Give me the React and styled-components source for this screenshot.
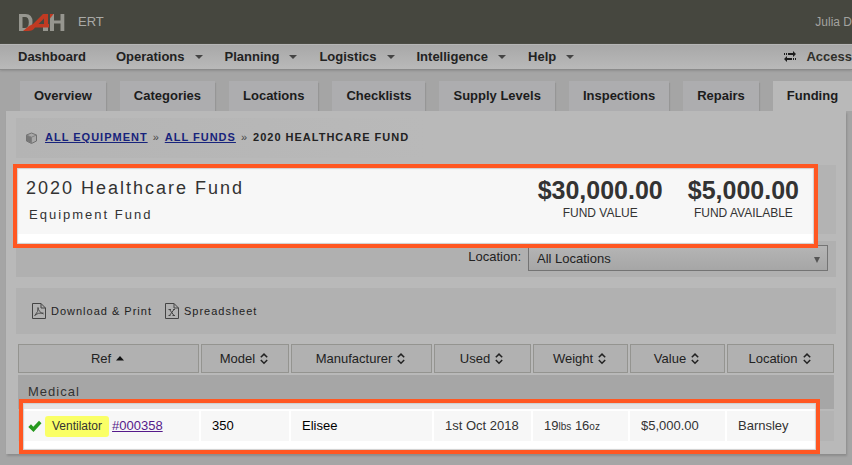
import React from "react";
import styled, { createGlobalStyle, css } from "styled-components";

const GlobalStyle = createGlobalStyle`
  * { box-sizing: border-box; }
  body {
    margin: 0;
    background: #a5a5a5;
    color: #222;
    font: 13px/16px "Liberation Sans", Arial, sans-serif;
    overflow: hidden;
  }
  button, select { font: inherit; color: inherit; }
`;

const Page = styled.div`
  white-space: nowrap;
  min-height: 100vh;
`;

const TopBar = styled.header`
  display: flex;
  align-items: center;
  height: 44px;
  padding: 0 0 0 18px;
  background: #46473f;
  color: #a3a39f;
`;

const LogoLink = styled.a`
  display: block;
  height: 20px;
  svg { display: block; }
`;

const OrgName = styled.span`
  margin-left: 13px;
  color: #aaaaa6;
`;

const UserLink = styled.a`
  margin-left: auto;
  color: inherit;
  font-size: 12px;
  text-decoration: none;
`;

const MainNav = styled.nav`
  display: flex;
  align-items: center;
  height: 26px;
  padding-left: 18px;
  border-top: 1px solid #b6b6b6;
  border-bottom: 1px solid #8b8b8b;
  background: linear-gradient(#a8a8a8, #b9b9b9);
  box-shadow: 0 1px 2px #8f8f8f;
  position: relative;
`;

const NavButton = styled.button`
  display: flex;
  align-items: center;
  gap: 10px;
  padding: 0;
  margin-right: ${(p) => (p.$plain ? 30 : 22)}px;
  border: 0;
  background: none;
  font-weight: 700;
`;

const Caret = styled.span`
  border: 4px solid transparent;
  border-top-color: #444;
  border-bottom: 0;
`;

const AccessButton = styled(NavButton)`
  margin: 0 0 0 auto;
  color: #30302b;
`;

const Tabs = styled.nav`
  display: flex;
  gap: 14px;
  padding: 11px 0 0 20px;
`;

const Tab = styled.a`
  padding: 7px 14px;
  color: #1c1c1c;
  background: #adadaf;
  font-weight: 700;
  text-decoration: none;
  box-shadow: 1px 2px 1px #969696;
  ${(p) =>
    p.$active &&
    css`
      flex: 1;
      background: #b9b9b9;
      box-shadow: none;
    `}
`;

const Card = styled.main`
  position: relative;
  margin: 0 6px;
  padding: 7px 10px 11px;
  background: #b9b9b9;
  box-shadow: 1px 2px 2px #8c8c8c;
`;

const Breadcrumb = styled.nav`
  display: flex;
  align-items: center;
  gap: 5px;
  height: 40px;
  margin-bottom: 7px;
  padding: 0 0 2px 10px;
  background: linear-gradient(90deg, #b4b4b4, #b9b9b9 50%);
  font-size: 11px;
  font-weight: 700;
  letter-spacing: 1px;
  text-transform: uppercase;
  svg { margin: 2px 3px 0 0; }
`;

const CrumbLink = styled.a`
  color: #17237c;
`;

const Divider = styled.span`
  color: #444;
  font-weight: 400;
`;

const Spotlight = styled.div`
  position: relative;
  z-index: 1;
  &::before,
  &::after {
    content: "";
    position: absolute;
    inset: ${(p) => p.$inset};
    pointer-events: none;
  }
  &::before {
    z-index: -1;
    background: #fff;
  }
  &::after {
    border: 4px solid #ff5722;
    box-shadow: inset 0 0 1px 1px #cfcfcf;
  }
`;

const Panel = styled.section`
  display: flex;
  background: rgba(0, 0, 0, 0.03);
`;

const FundPanel = styled(Panel)`
  height: 69px;
  padding: 12px 37px 0 10px;
  color: #333;
`;

const FundTitle = styled.h1`
  margin: 0;
  font-size: 18px;
  line-height: 22px;
  font-weight: 400;
  letter-spacing: 2px;
`;

const FundKind = styled.p`
  margin: 8px 0 0 3px;
  letter-spacing: 2px;
`;

const Stats = styled.dl`
  display: flex;
  gap: 25px;
  margin: 0 0 0 auto;
  text-align: center;
`;

const Stat = styled.div`
  display: flex;
  flex-direction: column-reverse;
  justify-content: flex-end;
`;

const StatLabel = styled.dt`
  margin-top: 2px;
  font-size: 12px;
`;

const StatValue = styled.dd`
  margin: 0;
  font-size: 25px;
  line-height: 26px;
  font-weight: 700;
`;

const FilterPanel = styled(Panel)`
  justify-content: flex-end;
  gap: 7px;
  height: 36px;
  margin: 7px 0 11px;
  padding: 4px 8px 0;
  background: #b0b0b0;
`;

const FilterLabel = styled.label`
  padding-top: 4px;
`;

const SelectBox = styled.div`
  position: relative;
  display: flex;
  flex: 0 0 300px;
  svg {
    position: absolute;
    right: 7px;
    top: 12px;
    pointer-events: none;
  }
`;

const Select = styled.select`
  appearance: none;
  width: 100%;
  height: 26px;
  padding: 1px 8px 0;
  border: 1px solid #747474;
  border-radius: 0;
  background: linear-gradient(#b5b5b5, #a6a6a6);
`;

const Toolbar = styled(Panel)`
  align-items: center;
  gap: 13px;
  height: 46px;
  margin-bottom: 8px;
  padding-left: 16px;
  background: #b1b1b1;
`;

const ToolButton = styled.button`
  display: flex;
  align-items: center;
  gap: 5px;
  padding: 0;
  border: 0;
  background: none;
  font-size: 11px;
  letter-spacing: 1px;
`;

const Table = styled.table`
  width: 100%;
  table-layout: fixed;
  border-spacing: 2px;
`;

const Col = styled.col`
  width: ${(p) => (p.$w ? `${p.$w}px` : "auto")};
`;

const HeadCell = styled.th`
  height: 29px;
  padding: 0 2px 0 0;
  border: 1px solid #949490;
  background: #b1b1b1;
  font-weight: 400;
`;

const SortButton = styled.button`
  display: inline-flex;
  align-items: center;
  gap: 5px;
  padding: 0;
  border: 0;
  background: none;
`;

const GroupCell = styled.th`
  height: 34px;
  padding: 0 10px;
  background: rgba(0, 0, 0, 0.1);
  color: #333;
  font-weight: 400;
  letter-spacing: 1px;
  text-align: left;
`;

const Cell = styled.td`
  height: 30px;
  padding: 0 ${(p) => (p.$first ? 10 : 11)}px;
  background: rgba(0, 0, 0, 0.03);
  color: ${(p) => (p.$strong ? "#000" : "#333")};
  small { font-size: 10px; }
`;

const RefLine = styled.div`
  display: flex;
  align-items: center;
  gap: 3px;
`;

const TypeTag = styled.span`
  padding: 2px 7px 3px;
  border-radius: 3px;
  background: #faff66;
  font-size: 12px;
`;

const RefLink = styled.a`
  color: #551a8b;
`;

function Logo() {
  return (
    <svg width="47" height="20" viewBox="0 0 47 20" aria-label="D4H" role="img">
      <path
        d="M1 2h6.500Q14.500 2 14.500 10q0 9-7 9H1zM4.500 5v11H7q3.800 0 3.800-5.800Q10.800 5 7 5z"
        fill="#96968f"
        fillRule="evenodd"
      />
      <path d="M32 2h4v6.500h6.500V2h3.800v17h-3.800v-7.500H36V19h-4z" fill="#96968f" />
      <path d="M25 15h5v4h-5z" fill="#96968f" />
      <path
        d="M5 19l6-5 4-2L25 2h5v10h1v3.500H17q-2 3.500-7 3.500zM26 6.500L20.500 12H26z"
        fill="#c03a22"
        fillRule="evenodd"
      />
      <path d="M32 2h3.500L32 6.500z" fill="#c03a22" />
    </svg>
  );
}

function SwapIcon() {
  return (
    <svg width="12" height="13" viewBox="0 0 12 13" aria-hidden="true">
      <path d="M4 3h5M3 8h5" stroke="#1c1c1c" strokeWidth="2" />
      <path d="M0 3h1m1 0h1M9 8h1m1 0h1" stroke="#1c1c1c" strokeWidth="2" />
      <path d="M9 0l3 3-3 3zM3 5L0 8l3 3z" fill="#1c1c1c" />
    </svg>
  );
}

function CubeIcon() {
  return (
    <svg width="11" height="12" viewBox="0 0 11 12" aria-hidden="true">
      <path d="M.5 3 5.500 1l5 2v6l-5 2.500-5-2.500z" fill="#a8a8a8" stroke="#707070" />
      <path d="M.5 3l5 2.200v6l-5-2.200z" fill="#777" />
      <path d="M.5 3l5 2.200 5-2.200M5.500 5.200v6" fill="none" stroke="#808080" />
    </svg>
  );
}

function FileIcon({ kind }) {
  return (
    <svg width="14" height="16" viewBox="0 0 14 16" fill="none" stroke="#444" aria-hidden="true">
      <path d="M.5.5h8.500l4.500 4.500v10.500H.5zM9 .5V5h4.500" />
      {kind === "pdf" ? (
        <path d="M6 4.500q1 3.500-3.500 8.500M6 4.500q.5 4.500 5.500 6.500M3 12q3-2.500 8.500-2" strokeWidth=".9" />
      ) : (
        <path d="M4.500 6.500l4.500 6M9 6.500l-4.500 6M3.500 6.500H6M8 6.500h2M3.500 12.500h2M7.500 12.500H10" />
      )}
    </svg>
  );
}

function SortIcon({ active }) {
  return active ? (
    <svg width="8" height="12" viewBox="0 0 8 12" aria-hidden="true">
      <path d="M4 3 8 7.500H0z" fill="#111" />
    </svg>
  ) : (
    <svg width="8" height="12" viewBox="0 0 8 12" fill="none" stroke="#222" strokeWidth="1.500" aria-hidden="true">
      <path d="M.8 4.300 4 1.100l3.200 3.200M.8 7 4 10.200l3.200-3.200" />
    </svg>
  );
}

function TickIcon() {
  return (
    <svg width="14" height="12" viewBox="0 0 14 12" role="img" aria-label="OK">
      <path d="M.3 7 3 4.300l2.300 2.500L11 .7l2.500 2.500L5.500 12z" fill="#27991f" />
    </svg>
  );
}

const menus = ["Operations", "Planning", "Logistics", "Intelligence", "Help"];
const tabs = [
  "Overview", "Categories", "Locations", "Checklists",
  "Supply Levels", "Inspections", "Repairs", "Funding",
];
const columns = [
  { name: "Ref" },
  { name: "Model", width: 88 },
  { name: "Manufacturer", width: 141 },
  { name: "Used", width: 97 },
  { name: "Weight", width: 95 },
  { name: "Value", width: 95 },
  { name: "Location", width: 107 },
];
const stats = [
  ["FUND VALUE", "$30,000.00"],
  ["FUND AVAILABLE", "$5,000.00"],
];

export default function App() {
  return (
    <Page>
      <GlobalStyle />
      <TopBar>
        <LogoLink href="#home"><Logo /></LogoLink>
        <OrgName>ERT</OrgName>
        <UserLink href="#profile">Julia D</UserLink>
      </TopBar>
      <MainNav>
        <NavButton $plain>Dashboard</NavButton>
        {menus.map((name) => (
          <NavButton key={name}>{name}<Caret /></NavButton>
        ))}
        <AccessButton><SwapIcon />Access</AccessButton>
      </MainNav>
      <Tabs>
        {tabs.map((name) => (
          <Tab key={name} href={`#${name}`} $active={name === "Funding"}>{name}</Tab>
        ))}
      </Tabs>
      <Card>
        <Breadcrumb>
          <CubeIcon />
          <CrumbLink href="#equipment">All Equipment</CrumbLink>
          <Divider>»</Divider>
          <CrumbLink href="#funds">All Funds</CrumbLink>
          <Divider>»</Divider>
          <span>2020 Healthcare Fund</span>
        </Breadcrumb>
        <Spotlight $inset="-1px 18px -14px -3px">
          <FundPanel>
            <div>
              <FundTitle>2020 Healthcare Fund</FundTitle>
              <FundKind>Equipment Fund</FundKind>
            </div>
            <Stats>
              {stats.map(([label, value]) => (
                <Stat key={label}>
                  <StatLabel>{label}</StatLabel>
                  <StatValue>{value}</StatValue>
                </Stat>
              ))}
            </Stats>
          </FundPanel>
        </Spotlight>
        <FilterPanel>
          <FilterLabel htmlFor="location">Location:</FilterLabel>
          <SelectBox>
            <Select id="location"><option>All Locations</option></Select>
            <svg width="8" height="6" viewBox="0 0 8 6" aria-hidden="true">
              <path d="M1 0h6L4 6z" fill="#555" />
            </svg>
          </SelectBox>
        </FilterPanel>
        <Toolbar>
          <ToolButton><FileIcon kind="pdf" />Download &amp; Print</ToolButton>
          <ToolButton><FileIcon kind="sheet" />Spreadsheet</ToolButton>
        </Toolbar>
        <Spotlight $inset="57px 16px -11px 3px">
          <Table>
            <colgroup>
              {columns.map((c) => <Col key={c.name} $w={c.width} />)}
            </colgroup>
            <thead>
              <tr>
                {columns.map((c) => (
                  <HeadCell key={c.name} scope="col">
                    <SortButton>{c.name}<SortIcon active={c.name === "Ref"} /></SortButton>
                  </HeadCell>
                ))}
              </tr>
            </thead>
            <tbody>
              <tr><GroupCell colSpan={7} scope="rowgroup">Medical</GroupCell></tr>
              <tr>
                <Cell $first>
                  <RefLine>
                    <TickIcon />
                    <TypeTag>Ventilator</TypeTag>
                    <RefLink href="#000358">#000358</RefLink>
                  </RefLine>
                </Cell>
                <Cell $strong>350</Cell>
                <Cell $strong>Elisee</Cell>
                <Cell>1st Oct 2018</Cell>
                <Cell>19<small>lbs</small> 16<small>oz</small></Cell>
                <Cell>$5,000.00</Cell>
                <Cell>Barnsley</Cell>
              </tr>
            </tbody>
          </Table>
        </Spotlight>
      </Card>
    </Page>
  );
}
